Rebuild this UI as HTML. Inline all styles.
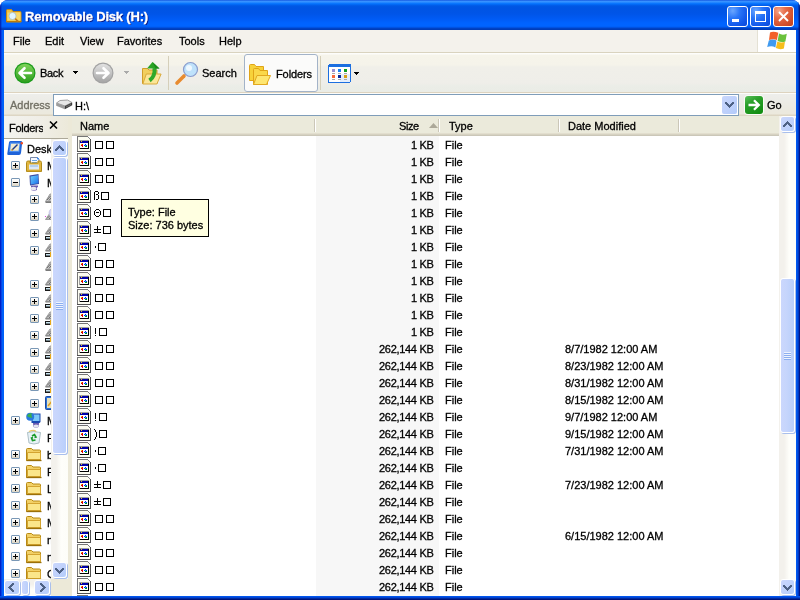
<!DOCTYPE html>
<html><head><meta charset="utf-8">
<style>
*{box-sizing:border-box;margin:0;padding:0}
html,body{width:800px;height:600px;overflow:hidden;background:#fff}
body{position:relative;font-family:"Liberation Sans",sans-serif;font-size:11px;color:#000}
.a{position:absolute;white-space:nowrap;will-change:transform;-webkit-text-stroke:0.3px currentColor}
svg{position:absolute;overflow:visible}
#frame{position:absolute;left:0;top:0;width:800px;height:600px;border-radius:8px 8px 0 0;overflow:hidden;background:#0831d9}
#title{position:absolute;left:0;top:0;width:800px;height:30px;
 background:linear-gradient(to bottom,#0a46d8 0px,#3a93ff 1px,#3590ff 2px,#127dff 3px,#036ffc 4px,#0262ee 5px,#0057e5 6px,#0054e3 8px,#0055e8 14px,#005bf5 19px,#0063ff 23px,#0064ff 26px,#005cf3 27px,#0048d0 28px,#003cb8 29px,#003cb8 30px)}
#ttext{left:25px;top:9px;font-weight:bold;font-size:13px;color:#fff;text-shadow:1px 1px 0 #0a1883;letter-spacing:-0.18px}
.tb{position:absolute;top:6px;width:21px;height:21px;border:1px solid #fff;border-radius:3px;
 background:radial-gradient(ellipse at 25% 20%,#6aa6ff 0%,#2a76f8 35%,#1359ea 70%,#0b48d8 100%)}
#bclose{background:radial-gradient(ellipse at 25% 20%,#f3a58a 0%,#e66a47 35%,#d4502b 70%,#c1401c 100%)}
/* borders */
#lb{left:0;top:30px;width:4px;height:570px;background:linear-gradient(to right,#0020c8 0,#0020c8 1px,#0844e4 1px,#0844e4 2px,#0060f8 2px,#0060f8 4px)}
#rb{left:796px;top:30px;width:4px;height:570px;background:linear-gradient(to right,#0058f0 0,#0058f0 1px,#004ee0 1px,#004ee0 2px,#0038c0 2px,#0038c0 3px,#00168c 3px)}
#bb{left:0;top:596px;width:800px;height:4px;background:linear-gradient(to bottom,#0055ee 0,#0055ee 1px,#0044d4 1px,#0044d4 2px,#002aa0 2px,#002aa0 3px,#001478 3px)}
.mi{top:35px}
.bx{position:absolute;width:8px;height:8px;border:1px solid #000}
.exp{position:absolute;width:9px;height:9px;border:1px solid #7a98b6;border-radius:1px;background:linear-gradient(to bottom,#fff 0,#f6f4ef 40%,#d9d2c1 100%)}
.exp b{position:absolute;left:1px;top:3px;width:5px;height:1px;background:#000}
.exp i{position:absolute;left:3px;top:1px;width:1px;height:5px;background:#000}
.trk{background:linear-gradient(to right,#f3f1ec 0,#f3f1ec 30%,#fefefa 60%,#fdfdf8 100%)}
.trkh{background:linear-gradient(to bottom,#f3f1ec 0,#f3f1ec 30%,#fefefa 60%,#fdfdf8 100%)}
.sbb{position:absolute;border:1px solid #fff;border-radius:3px;box-shadow:1px 1px 0 #a9bfec;background:linear-gradient(135deg,#cad7fd 0,#bfd1fb 55%,#b7cefb 85%,#c4d9fc 100%)}
.thumb{position:absolute;border:1px solid #fff;border-radius:3px;box-shadow:1px 1px 0 #a9bfec;background:linear-gradient(to right,#cbd7fd 0,#c6d5fc 40%,#b9cffb 100%)}
.grip{position:absolute;width:7px;height:8px;background:repeating-linear-gradient(to bottom,#eef3fe 0,#eef3fe 1px,#8caef0 1px,#8caef0 2px)}
.hdr{background:linear-gradient(to bottom,#ebeadb 0,#ebeadb 17px,#e2dece 17px,#e2dece 18px,#d6d2c2 18px,#d6d2c2 19px,#cbc7b8 19px)}
.hsep{width:2px;height:13px;border-left:1px solid #cbc7b8;border-right:1px solid #fff}

</style></head><body>
<svg width="0" height="0" style="position:absolute">
<defs>
<symbol id="ficon" viewBox="0 0 14 16" shape-rendering="crispEdges">
 <path d="M1 1h10v1h1v1h1v12H1z" fill="#fcfcf1"/>
 <rect x="0" y="0" width="1" height="16" fill="#767676"/>
 <rect x="0" y="0" width="11" height="1" fill="#767676"/>
 <rect x="11" y="1" width="1" height="1" fill="#808080"/>
 <rect x="12" y="2" width="1" height="1" fill="#808080"/>
 <rect x="11" y="2" width="1" height="1" fill="#fff"/>
 <rect x="13" y="3" width="1" height="13" fill="#505050"/>
 <rect x="0" y="15" width="14" height="1" fill="#505050"/>
 <rect x="2" y="4" width="10" height="9" fill="#a0a0a0"/>
 <rect x="3" y="5" width="9" height="8" fill="#000"/>
 <rect x="3" y="5" width="8" height="2" fill="#0000a8"/>
 <rect x="3" y="7" width="8" height="5" fill="#fff"/>
 <rect x="4" y="5" width="1" height="1" fill="#f0c020"/>
 <rect x="5" y="8" width="1" height="3" fill="#e00000"/>
 <rect x="4" y="9" width="1" height="1" fill="#d00000"/>
 <rect x="4" y="8" width="1" height="1" fill="#f0e000"/>
 <rect x="8" y="8" width="1" height="1" fill="#0020f0"/>
 <rect x="7" y="9" width="3" height="1" fill="#0020f0"/>
 <rect x="8" y="9" width="1" height="1" fill="#00d0f0"/>
 <rect x="8" y="10" width="2" height="1" fill="#00a000"/>
</symbol>
<symbol id="folder" viewBox="0 0 16 16">
 <path d="M1 3.5h5l1.5 1.5h7v9.5H1z" fill="#e9c45a" stroke="#c39a2c"/>
 <path d="M1.5 6.5h13v7.5h-13z" fill="#fbe48e"/>
 <path d="M1 14.5h14" stroke="#b0891f"/>
</symbol>
<symbol id="drive" viewBox="0 0 16 16">
 <path d="M1 9l4-5h9l-2 5z" fill="#c8c8c8" stroke="#7d7d7d" stroke-width="0.8"/>
 <rect x="1" y="9" width="11" height="4" fill="#4a4a4a"/>
 <rect x="2" y="10" width="9" height="2" fill="#9ec6e6"/>
 <rect x="12" y="9" width="2" height="4" fill="#e0a020"/>
</symbol>

<symbol id="i_desk" viewBox="0 0 16 16">
 <path d="M2 2.5Q2 1 3.5 1H14q1.5 0 1.2 1.5L14 13q-.3 2-2 2H1.5Q0 15 .3 13.5z" fill="#1f63d8"/>
 <path d="M3 2.5h10.5l-1.2 9.5H2z" fill="#4a8ef0"/>
 <path d="M4 3.8h8.5l-1 7H3.2z" fill="#f1ead0"/>
 <path d="M5 10l5.5-5.5" stroke="#1a3a8a" stroke-width="1.5"/>
 <path d="M4.5 10.5l1-1" stroke="#e8a020" stroke-width="1.4"/>
 <circle cx="14.8" cy="3.2" r="1.3" fill="#f04a20"/>
</symbol>
<symbol id="i_mydocs" viewBox="0 0 16 16">
 <path d="M4.5 0.5h7l1.5 1.5v8h-8.5z" fill="#f6f9ff" stroke="#7888a8"/>
 <path d="M11.5 0.5v1.5h1.5" fill="#3a8af0" stroke="#3a8af0"/>
 <path d="M6 3.5h5M6 5.5h5" stroke="#6aa8e8"/>
 <path d="M0.5 5.5q0-1.5 1.5-1.5h2v2h8v-2h2q1.5 0 1.5 1.5v9h-15z" fill="#e2b640" stroke="#b08a1a"/>
 <path d="M3 7.5h10v5H3z" fill="#dde9f7"/>
 <path d="M4 9h8" stroke="#8ab8e8"/>
 <path d="M1 13.5h14v1H1z" fill="#c89a20"/>
</symbol>
<symbol id="i_mycomp" viewBox="0 0 16 17">
 <path d="M3.5 1.5l9-1.5 .5 10-9 1.5z" fill="#3a4aa0"/>
 <path d="M4.5 2.5l7.5-1.2.3 8-7.5 1.2z" fill="url(#gscr)"/>
 <path d="M5 11.5h7v1.5l-1 .5v2.5q-3 1.5-6 0z" fill="#6a5ab0"/>
 <ellipse cx="7.5" cy="14.5" rx="3" ry="1.8" fill="#e8e8f0"/>
</symbol>
<linearGradient id="gscr" x1="0" y1="0" x2="1" y2="1"><stop offset="0" stop-color="#6cd0ff"/><stop offset="1" stop-color="#1a6ee8"/></linearGradient>
<symbol id="i_drive" viewBox="0 0 16 16">
 <path d="M0.5 10.5L5 3h11l-4.5 7.5z" fill="#c8c8c8" stroke="#8c8c8c" stroke-width="0.8"/>
 <path d="M2 9L6 4.5M4 9.5L7.5 5" stroke="#6a6a6a" stroke-width="1"/>
 <path d="M0.5 10.5h11v1.5H0.5z" fill="#7a7a7a"/>
</symbol>
<symbol id="i_drivey" viewBox="0 0 16 16">
 <path d="M0.5 8.5L5 2h11l-4.5 6.5z" fill="#c8c8c8" stroke="#8c8c8c" stroke-width="0.8"/>
 <path d="M2 7.5L6 3.5M4 8L7.5 4" stroke="#6a6a6a" stroke-width="1"/>
 <path d="M0.5 8.5h11v1H0.5z" fill="#7a7a7a"/>
 <rect x="0" y="11" width="5" height="4" fill="#1a1a1a"/>
 <rect x="1" y="12" width="4" height="1.5" fill="#c8e4f0"/>
 <rect x="5" y="10" width="1.5" height="5" fill="#e8a818"/>
</symbol>
<symbol id="i_cd" viewBox="0 0 16 16">
 <path d="M0.5 11.5L5 5h11l-4.5 6.5z" fill="#c8c8c8" stroke="#8c8c8c" stroke-width="0.8"/>
 <path d="M2 10.5L6 6.5M4 11L7.5 7" stroke="#6a6a6a" stroke-width="1"/>
 <circle cx="9" cy="5" r="5" fill="#d8d8f4" stroke="#b0b0d8" stroke-width="0.6"/>
 <rect x="0" y="8" width="1" height="1" fill="#e040e0"/>
</symbol>
<symbol id="i_cpanel" viewBox="0 0 16 16">
 <rect x="0.5" y="1.5" width="14" height="13" rx="1" fill="#2a70d8" stroke="#1a4aa0"/>
 <rect x="2" y="3" width="11" height="10" fill="#e8e0b8"/>
 <path d="M3 11l4-5 3 3" stroke="#e0a020" stroke-width="1.5" fill="none"/>
</symbol>
<symbol id="i_net" viewBox="0 0 16 16">
 <path d="M5.5 1.5h9v8.5l-1 1h-8z" fill="#1a4ab0"/>
 <path d="M6.5 2.5h7v6.5h-7z" fill="#7cc8f8"/>
 <circle cx="4.2" cy="4.8" r="4" fill="#2a7ae0"/>
 <path d="M1 4c1-2 3-3 5-2.5-1 1.5-.5 3 .5 4-2 .5-3.5 0-5.5-1.5z" fill="#3ab04a"/>
 <path d="M7 11h6v1.5l-.5 .5V15q-2.5 1.2-5 0z" fill="#6a5ab0"/>
 <ellipse cx="10" cy="14" rx="2.6" ry="1.6" fill="#e4e4ee"/>
</symbol>
<symbol id="i_recyc" viewBox="0 0 16 16">
 <path d="M1.5 3.5q6-2 13 0l-1.5 10.5q-5 2-10 0z" fill="#e8f2f6" stroke="#9ab0b8" stroke-width="0.8"/>
 <path d="M3 2.5q3-1.5 6-1l1 1.5" stroke="#e8c868" stroke-width="1.2" fill="none"/>
 <path d="M6 7l2.5-1.5L10 8l-1.5 .5M9.5 11l-3 .5-1-2.5 1.5-.5" stroke="#1a9a2a" stroke-width="1.6" fill="none"/>
</symbol>
<symbol id="i_folder" viewBox="0 0 16 16">
 <path d="M0.5 3.5q0-1 1-1h4l1.5 1.5h6.5q1 0 1 1v9.5H0.5z" fill="#f2d066" stroke="#b88a14"/>
 <path d="M1.5 6.5h13v7h-13z" fill="#fbe68a" stroke="#d4a430"/>
 <path d="M0.5 14.5h15" stroke="#9a700a" stroke-width="1.3"/>
</symbol>
<linearGradient id="gcirc" x1="0" y1="0" x2="0" y2="1"><stop offset="0" stop-color="#7fd35a"/><stop offset="1" stop-color="#2d9f1e"/></linearGradient>
<linearGradient id="gcircg" x1="0" y1="0" x2="0" y2="1"><stop offset="0" stop-color="#e2e2e2"/><stop offset="1" stop-color="#a5a5a5"/></linearGradient>
<linearGradient id="sbtn" x1="0" y1="0" x2="1" y2="1"><stop offset="0" stop-color="#dbe5fd"/><stop offset="1" stop-color="#b5cbf9"/></linearGradient>
</defs></svg>

<div id="frame">
 <div id="title"></div><div style="position:absolute;left:0;top:0;width:4px;height:30px;background:linear-gradient(to right,rgba(0,20,160,.7) 0,rgba(0,20,160,.7) 1px,rgba(0,30,170,.3) 1px,rgba(0,30,170,.3) 2px,transparent 2px)"></div><div style="position:absolute;left:796px;top:0;width:4px;height:30px;background:linear-gradient(to right,transparent 0,transparent 2px,rgba(0,20,120,.4) 2px,rgba(0,20,120,.4) 3px,rgba(0,10,110,.8) 3px)"></div>
</div>
<div id="lb" class="a"></div><div id="rb" class="a"></div><div id="bb" class="a"></div>

<!-- title icon -->
<svg style="left:6px;top:9px" width="16" height="14" viewBox="0 0 16 14">
 <path d="M0.5 1.5q0-1 1-1h4l1.5 2h7q1 0 1 1v9.5H0.5z" fill="#f0c040" stroke="#c88a10"/>
 <path d="M1.5 3.5h13v8h-13z" fill="#f8d868"/>
 <path d="M0.5 12.5h15" stroke="#b87a08"/>
 <circle cx="6.5" cy="7" r="3.6" fill="#dff4ff" stroke="#a8b8c0" stroke-width="0.8"/>
 <path d="M9.2 9.6l3 3" stroke="#c07818" stroke-width="1.6"/>
</svg>
<div id="ttext" class="a">Removable Disk (H:)</div>
<div class="tb" style="left:727px"><div style="position:absolute;left:4px;top:12px;width:7px;height:3px;background:#fff"></div></div>
<div class="tb" style="left:750px"><div style="position:absolute;left:4px;top:4px;width:11px;height:11px;border:1px solid #fff;border-top-width:3px"></div></div>
<div class="tb" id="bclose" style="left:773px"><svg style="left:4px;top:4px" width="11" height="11" viewBox="0 0 11 11"><path d="M1 1L10 10M10 1L1 10" stroke="#fff" stroke-width="1.9"/></svg></div>

<!-- menu bar -->
<div class="a" style="left:4px;top:30px;width:753px;height:22px;background:#f4f2ec"></div>
<div class="a" style="left:757px;top:30px;width:39px;height:22px;background:#fff;border-left:1px solid #e4e1d4"></div>
<svg style="left:767px;top:31px" width="20" height="19" viewBox="0 0 20 19">
 <path d="M3 1.5C5 0.6 8 0.6 11.3 1.8L9.9 8.9C7.5 7.9 5 7.9 2 9z" fill="#f2602a"/>
 <path d="M12 2.6C14 3.8 16.5 4.2 19.8 2.8L18.4 10.4C15.5 11.4 13 11 10.6 10z" fill="#6ac13c"/>
 <path d="M1.8 9.6C4.5 8.2 7 8.3 9.5 9.5L8.4 16.4C6 15.1 3 15 0.2 16.1z" fill="#3f9af0"/>
 <path d="M10.3 10.6C12.5 11.6 15 11.8 17.9 11L16.9 17.6C14 18.5 11.5 18.3 8.9 17.1z" fill="#f6bd1c"/>
</svg>
<div class="a mi" style="left:13px">File</div>
<div class="a mi" style="left:45px">Edit</div>
<div class="a mi" style="left:80px">View</div>
<div class="a mi" style="left:117px">Favorites</div>
<div class="a mi" style="left:179px">Tools</div>
<div class="a mi" style="left:219px">Help</div>
<div class="a" style="left:4px;top:52px;width:792px;height:1px;background:#d9d3bf"></div>

<!-- toolbar -->
<div class="a" style="left:4px;top:53px;width:792px;height:39px;background:linear-gradient(to bottom,#fdfdfb 0,#fdfdfb 1px,#f6f4ea 2px,#f5f3ea 12px,#f0efe9 14px,#efeee9 30px,#ebede7 33px,#eaece6 39px)"></div>
<div class="a" style="left:4px;top:92px;width:792px;height:1px;background:#ddd3bf"></div>
<!-- back -->
<svg style="left:14px;top:62px" width="22" height="22" viewBox="0 0 22 22">
 <circle cx="11" cy="11" r="10.5" fill="#1b9b1b"/>
 <circle cx="11" cy="11" r="9.3" fill="url(#gcirc)"/>
 <path d="M17 11H6M10.5 6.2L5.5 11l5 4.8" fill="none" stroke="#fff" stroke-width="2.6" stroke-linecap="round" stroke-linejoin="round"/>
</svg>
<div class="a" style="left:40px;top:67px;letter-spacing:-0.3px">Back</div>
<svg style="left:73px;top:71px" width="5" height="3" shape-rendering="crispEdges"><path d="M0 0h5v1H0zM1 1h3v1H1zM2 2h1v1H2z" fill="#000"/></svg>
<!-- forward -->
<svg style="left:92px;top:62px" width="22" height="22" viewBox="0 0 22 22">
 <circle cx="11" cy="11" r="10.5" fill="#a2a2a2"/>
 <circle cx="11" cy="11" r="9.3" fill="url(#gcircg)"/>
 <path d="M5 11h11M11.5 6.2l5 4.8-5 4.8" fill="none" stroke="#fff" stroke-width="2.6" stroke-linecap="round" stroke-linejoin="round"/>
</svg>
<svg style="left:124px;top:71px" width="5" height="3" shape-rendering="crispEdges"><path d="M0 0h5v1H0zM1 1h3v1H1zM2 2h1v1H2z" fill="#aaa"/></svg>
<!-- up -->
<svg style="left:142px;top:61px" width="20" height="24" viewBox="0 0 20 24">
 <path d="M0.5 7.5h5l1.5 1.5h8v13.5H0.5z" fill="#f1cf5e" stroke="#d29e2a"/>
 <path d="M0.8 23l3.5-10h14.8l-4.2 10z" fill="#fbe698" stroke="#d6a430" stroke-width="0.9"/>
 <path d="M7.5 19.5C11 17 13 12 12.5 7" fill="none" stroke="#2fa82a" stroke-width="4"/>
 <path d="M5 7.5L10.5 1 17.5 7.5z" fill="#2aa424"/>
 <path d="M10.5 1L17.5 7.5h-4z" fill="#1a8a1a"/>
</svg>
<div class="a" style="left:168px;top:56px;width:1px;height:34px;background:#d5cfba"></div>
<!-- search -->
<svg style="left:175px;top:62px" width="24" height="23" viewBox="0 0 24 23">
 <path d="M2 21l7-7" stroke="#e88b2f" stroke-width="3.6" stroke-linecap="round"/>
 <circle cx="15.5" cy="7.5" r="7" fill="#bfe2fb" stroke="#8a9ccc" stroke-width="1.2"/>
 <circle cx="14" cy="6" r="3" fill="#eef8ff"/>
</svg>
<div class="a" style="left:202px;top:67px">Search</div>
<!-- folders button -->
<div class="a" style="left:244px;top:54px;width:74px;height:38px;border:1px solid #a3b3c8;border-radius:3px;background:#fbfbfa"></div>
<svg style="left:249px;top:64px" width="22" height="21" viewBox="0 0 22 21">
 <path d="M0.5 1.5q0-1 1-1h4l1.5 2h7.5v14H0.5z" fill="#f7d23a" stroke="#e0a418"/>
 <path d="M4.5 5.5q0-1 1-1h4l1.5 2h7.5v14H4.5z" fill="#fad84a" stroke="#e0a418"/>
 <path d="M4.5 20.5l3.5-9h13.5l-4 9z" fill="#fee670" stroke="#e2a820"/>
</svg>
<div class="a" style="left:276px;top:68px;letter-spacing:-0.1px">Folders</div>
<div class="a" style="left:320px;top:56px;width:1px;height:34px;background:#d5cfba"></div>
<!-- views -->
<svg style="left:328px;top:64px" width="24" height="20" viewBox="0 0 24 20" shape-rendering="crispEdges">
 <rect x="0" y="0" width="23" height="19" rx="2" fill="#1c6fe0"/>
 <rect x="1" y="3" width="21" height="15" fill="#fff"/>
 <rect x="12" y="10" width="10" height="8" fill="#e4eefc"/>
 <rect x="4" y="5" width="3" height="3" fill="#9a90d0"/><rect x="10" y="5" width="3" height="3" fill="#1a80f0"/><rect x="16" y="5" width="3" height="3" fill="#10a020"/>
 <rect x="4" y="9" width="3" height="1" fill="#a8a8a8"/><rect x="10" y="9" width="3" height="1" fill="#a8a8a8"/><rect x="16" y="9" width="3" height="1" fill="#a8a8a8"/>
 <rect x="4" y="11" width="3" height="3" fill="#f86a3a"/><rect x="10" y="11" width="3" height="3" fill="#0a2a98"/><rect x="16" y="11" width="3" height="3" fill="#d8a018"/>
 <rect x="4" y="15" width="3" height="1" fill="#a8a8a8"/><rect x="10" y="15" width="3" height="1" fill="#a8a8a8"/><rect x="16" y="15" width="3" height="1" fill="#a8a8a8"/>
</svg>
<svg style="left:354px;top:72px" width="5" height="3" shape-rendering="crispEdges"><path d="M0 0h5v1H0zM1 1h3v1H1zM2 2h1v1H2z" fill="#000"/></svg>

<!-- address bar -->
<div class="a" style="left:4px;top:93px;width:792px;height:23px;background:linear-gradient(to bottom,#fcfcfa 0,#fcfcfa 1px,#eeeeeb 1px,#ecebe5 10px,#ebe9df 18px,#ece9dd 21px,#ddd6c4 22px)"></div>
<div class="a" style="left:10px;top:99px;color:#716f64">Address</div>
<div class="a" style="left:53px;top:94px;width:686px;height:22px;background:#fff;border:1px solid #7f9db9"></div>
<svg style="left:55px;top:99px" width="18" height="11" viewBox="0 0 18 11">
 <path d="M1.5 4L5 1.5 12.5 1 17 3.5 10 7z" fill="#e8e8e8" stroke="#8a8a8a" stroke-width="0.8"/>
 <path d="M1.2 4L10 7 9.8 10.2 1.2 6.8z" fill="#9c9c9c"/>
 <path d="M10 7L17.2 3.5 17.2 6.2 9.8 10.2z" fill="#3a3a3a"/>
 <path d="M11 8L16 5.5" stroke="#8a8a8a" stroke-width="0.7"/>
</svg>
<div class="a" style="left:75px;top:100px">H:\</div>
<div class="a" style="left:722px;top:96px;width:15px;height:18px;border-radius:2px;background:linear-gradient(135deg,#c9d7fd 0,#bdd0fb 60%,#b3cbfa 100%)"></div>
<svg style="left:725px;top:102px" width="9" height="6" shape-rendering="crispEdges"><path d="M0 0h2v1H0zM7 0h2v1H7zM0 1h3v1H0zM6 1h3v1H6zM1 2h3v1H1zM5 2h3v1H5zM2 3h5v1H2zM3 4h3v1H3zM4 5h1v1H4z" fill="#4d6185"/></svg>
<div class="a" style="left:745px;top:96px;width:18px;height:18px;border-radius:3px;background:linear-gradient(150deg,#5cc05c 0,#2aa02a 35%,#0e8a0e 100%);box-shadow:0 0 0 1px #fbfbf6"></div>
<svg style="left:747px;top:98px" width="14" height="14" viewBox="0 0 14 14"><path d="M1.5 7h9.5M7 2.2L11.8 7 7 11.8" fill="none" stroke="#fff" stroke-width="2.3"/></svg>
<div class="a" style="left:767px;top:99px">Go</div>

<div class="a" style="left:4px;top:116px;width:64px;height:22px;background:linear-gradient(to right,#f3f3ef 0,#f0eee7 55%,#ece9da 100%)"></div>
<div class="a" style="left:68px;top:116px;width:4px;height:480px;background:#ece9d8"></div>
<div class="a" style="left:9px;top:122px;width:34px;overflow:hidden;letter-spacing:-0.3px">Folders</div>
<svg style="left:49px;top:121px" width="9" height="8" viewBox="0 0 9 8"><path d="M1 0.5l7 7M8 0.5l-7 7" stroke="#000" stroke-width="1.6"/></svg>
<div class="a" style="left:4px;top:138px;width:64px;height:1px;background:#aca899"></div>
<div class="a" style="left:4px;top:139px;width:47px;height:440px;background:#fff;overflow:hidden">
<div class="a" style="left:-4px;top:-139px;width:800px;height:600px">
<svg style="left:7px;top:140px" width="16" height="16" viewBox="0 0 16 16"><use href="#i_desk"/></svg>
<div class="a" style="left:27px;top:143px">Desktop</div>
<div class="exp" style="left:11px;top:161px"><i></i><b></b></div>
<svg style="left:26px;top:157px" width="16" height="16"><use href="#i_mydocs"/></svg>
<div class="a" style="left:47px;top:160px">My Documents</div>
<div class="exp" style="left:11px;top:178px"><b></b></div>
<svg style="left:26px;top:174px" width="16" height="17"><use href="#i_mycomp"/></svg>
<div class="a" style="left:47px;top:177px">My Computer</div>
<div class="exp" style="left:30px;top:195px"><i></i><b></b></div>
<svg style="left:45px;top:191px" width="16" height="16"><use href="#i_drive"/></svg>
<div class="a" style="left:66px;top:194px">Drive</div>
<div class="exp" style="left:30px;top:212px"><i></i><b></b></div>
<svg style="left:45px;top:208px" width="16" height="16"><use href="#i_cd"/></svg>
<div class="a" style="left:66px;top:211px">DVD</div>
<div class="exp" style="left:30px;top:229px"><i></i><b></b></div>
<svg style="left:45px;top:225px" width="16" height="16"><use href="#i_drivey"/></svg>
<div class="a" style="left:66px;top:228px">Drive</div>
<div class="exp" style="left:30px;top:246px"><i></i><b></b></div>
<svg style="left:45px;top:242px" width="16" height="16"><use href="#i_drivey"/></svg>
<div class="a" style="left:66px;top:245px">Drive</div>
<svg style="left:45px;top:259px" width="16" height="16"><use href="#i_drive"/></svg>
<div class="a" style="left:66px;top:262px">Drive</div>
<div class="exp" style="left:30px;top:280px"><i></i><b></b></div>
<svg style="left:45px;top:276px" width="16" height="16"><use href="#i_drivey"/></svg>
<div class="a" style="left:66px;top:279px">Drive</div>
<div class="exp" style="left:30px;top:297px"><i></i><b></b></div>
<svg style="left:45px;top:293px" width="16" height="16"><use href="#i_drivey"/></svg>
<div class="a" style="left:66px;top:296px">Drive</div>
<div class="exp" style="left:30px;top:314px"><i></i><b></b></div>
<svg style="left:45px;top:310px" width="16" height="16"><use href="#i_drivey"/></svg>
<div class="a" style="left:66px;top:313px">Drive</div>
<div class="exp" style="left:30px;top:331px"><i></i><b></b></div>
<svg style="left:45px;top:327px" width="16" height="16"><use href="#i_drivey"/></svg>
<div class="a" style="left:66px;top:330px">Drive</div>
<div class="exp" style="left:30px;top:348px"><i></i><b></b></div>
<svg style="left:45px;top:344px" width="16" height="16"><use href="#i_drivey"/></svg>
<div class="a" style="left:66px;top:347px">Drive</div>
<div class="exp" style="left:30px;top:365px"><i></i><b></b></div>
<svg style="left:45px;top:361px" width="16" height="16"><use href="#i_drivey"/></svg>
<div class="a" style="left:66px;top:364px">Drive</div>
<div class="exp" style="left:30px;top:382px"><i></i><b></b></div>
<svg style="left:45px;top:378px" width="16" height="16"><use href="#i_drivey"/></svg>
<div class="a" style="left:66px;top:381px">Drive</div>
<div class="exp" style="left:30px;top:399px"><i></i><b></b></div>
<svg style="left:45px;top:395px" width="16" height="16"><use href="#i_cpanel"/></svg>
<div class="a" style="left:66px;top:398px">Shared</div>
<div class="exp" style="left:11px;top:416px"><i></i><b></b></div>
<svg style="left:26px;top:412px" width="16" height="16"><use href="#i_net"/></svg>
<div class="a" style="left:47px;top:415px">My Network Places</div>
<svg style="left:26px;top:429px" width="16" height="16"><use href="#i_recyc"/></svg>
<div class="a" style="left:47px;top:432px">Recycle Bin</div>
<div class="exp" style="left:11px;top:450px"><i></i><b></b></div>
<svg style="left:26px;top:446px" width="16" height="16"><use href="#i_folder"/></svg>
<div class="a" style="left:47px;top:449px">bxxxx</div>
<div class="exp" style="left:11px;top:467px"><i></i><b></b></div>
<svg style="left:26px;top:463px" width="16" height="16"><use href="#i_folder"/></svg>
<div class="a" style="left:47px;top:466px">Fxxxx</div>
<div class="exp" style="left:11px;top:484px"><i></i><b></b></div>
<svg style="left:26px;top:480px" width="16" height="16"><use href="#i_folder"/></svg>
<div class="a" style="left:47px;top:483px">Lxxxx</div>
<div class="exp" style="left:11px;top:501px"><i></i><b></b></div>
<svg style="left:26px;top:497px" width="16" height="16"><use href="#i_folder"/></svg>
<div class="a" style="left:47px;top:500px">Mxxxx</div>
<div class="exp" style="left:11px;top:518px"><i></i><b></b></div>
<svg style="left:26px;top:514px" width="16" height="16"><use href="#i_folder"/></svg>
<div class="a" style="left:47px;top:517px">Mxxxx</div>
<div class="exp" style="left:11px;top:535px"><i></i><b></b></div>
<svg style="left:26px;top:531px" width="16" height="16"><use href="#i_folder"/></svg>
<div class="a" style="left:47px;top:534px">mxxxx</div>
<div class="exp" style="left:11px;top:552px"><i></i><b></b></div>
<svg style="left:26px;top:548px" width="16" height="16"><use href="#i_folder"/></svg>
<div class="a" style="left:47px;top:551px">mxxxx</div>
<div class="exp" style="left:11px;top:569px"><i></i><b></b></div>
<svg style="left:26px;top:565px" width="16" height="16"><use href="#i_folder"/></svg>
<div class="a" style="left:47px;top:568px">Cxxxx</div>
</div></div>
<div class="a trk" style="left:51px;top:139px;width:17px;height:440px"></div>
<div class="sbb" style="left:52px;top:140px;width:15px;height:16px"><svg style="left:2px;top:4px" width="9" height="6" shape-rendering="crispEdges"><path d="M4 0h1v1h-1zM3 1h3v1h-3zM2 2h5v1h-5zM1 3h3v1h-3zM5 3h3v1h-3zM0 4h3v1h-3zM6 4h3v1h-3zM0 5h2v1h-2zM7 5h2v1h-2z" fill="#4d6185"/></svg></div>
<div class="thumb" style="left:52px;top:157px;width:15px;height:297px"><i class="grip" style="left:3px;top:144px"></i></div>
<div class="sbb" style="left:52px;top:562px;width:15px;height:16px"><svg style="left:2px;top:5px" width="9" height="6" shape-rendering="crispEdges"><path d="M0 0h2v1h-2zM7 0h2v1h-2zM0 1h3v1h-3zM6 1h3v1h-3zM1 2h3v1h-3zM5 2h3v1h-3zM2 3h5v1h-5zM3 4h3v1h-3zM4 5h1v1h-1z" fill="#4d6185"/></svg></div>
<div class="a trkh" style="left:4px;top:579px;width:47px;height:17px"></div>
<div class="sbb" style="left:4px;top:580px;width:16px;height:15px"><svg style="left:3px;top:2px" width="6" height="9" shape-rendering="crispEdges"><path d="M4 0h2v1h-2zM3 1h3v1h-3zM2 2h3v1h-3zM1 3h3v1h-3zM0 4h3v1h-3zM1 5h3v1h-3zM2 6h3v1h-3zM3 7h3v1h-3zM4 8h2v1h-2z" fill="#4d6185"/></svg></div>
<div class="thumb" style="left:21px;top:580px;width:8px;height:15px"></div>
<div class="sbb" style="left:34px;top:580px;width:16px;height:15px"><svg style="left:5px;top:2px" width="6" height="9" shape-rendering="crispEdges"><path d="M0 0h2v1h-2zM0 1h3v1h-3zM1 2h3v1h-3zM2 3h3v1h-3zM3 4h3v1h-3zM2 5h3v1h-3zM1 6h3v1h-3zM0 7h3v1h-3zM0 8h2v1h-2z" fill="#4d6185"/></svg></div>
<div class="a" style="left:51px;top:579px;width:17px;height:17px;background:#ece9d8"></div>
<div class="a" style="left:72px;top:116px;width:707px;height:480px;background:#fff;overflow:hidden">
<div class="a" style="left:-72px;top:-116px;width:800px;height:600px">
<div class="a" style="left:316px;top:136px;width:123px;height:465px;background:#f7f7f7"></div>
<div class="bx" style="left:95px;top:141px"></div>
<div class="bx" style="left:106px;top:141px"></div>
<svg style="left:77px;top:136px" width="14" height="16"><use href="#ficon"/></svg>
<div class="a sz" style="right:366.7px;top:139px;letter-spacing:-0.3px">1 KB</div>
<div class="a" style="left:445px;top:139px">File</div>
<div class="bx" style="left:95px;top:158px"></div>
<div class="bx" style="left:106px;top:158px"></div>
<svg style="left:77px;top:153px" width="14" height="16"><use href="#ficon"/></svg>
<div class="a sz" style="right:366.7px;top:156px;letter-spacing:-0.3px">1 KB</div>
<div class="a" style="left:445px;top:156px">File</div>
<div class="bx" style="left:95px;top:175px"></div>
<div class="bx" style="left:106px;top:175px"></div>
<svg style="left:77px;top:170px" width="14" height="16"><use href="#ficon"/></svg>
<div class="a sz" style="right:366.7px;top:173px;letter-spacing:-0.3px">1 KB</div>
<div class="a" style="left:445px;top:173px">File</div>
<svg style="left:94px;top:191px" width="5" height="9" shape-rendering="crispEdges"><path d="M1 0h3v1h-3zM0 1h1v1h-1zM4 1h1v1h-1zM0 2h1v1h-1zM4 2h1v1h-1zM0 3h1v1h-1zM2 3h2v1h-2zM0 4h1v1h-1zM4 4h1v1h-1zM0 5h1v1h-1zM4 5h1v1h-1zM0 6h1v1h-1zM4 6h1v1h-1zM0 7h1v1h-1zM4 7h1v1h-1zM0 8h1v1h-1zM2 8h2v1h-2z" fill="#000"/></svg>
<div class="bx" style="left:101px;top:192px"></div>
<svg style="left:77px;top:187px" width="14" height="16"><use href="#ficon"/></svg>
<div class="a sz" style="right:366.7px;top:190px;letter-spacing:-0.3px">1 KB</div>
<div class="a" style="left:445px;top:190px">File</div>
<svg style="left:94px;top:209px" width="7" height="8" shape-rendering="crispEdges"><path d="M2 0h3v1h-3zM1 1h1v1h-1zM5 1h1v1h-1zM0 2h1v1h-1zM6 2h1v1h-1zM0 3h1v1h-1zM2 3h3v1h-3zM6 3h1v1h-1zM0 4h1v1h-1zM6 4h1v1h-1zM0 5h1v1h-1zM6 5h1v1h-1zM1 6h1v1h-1zM5 6h1v1h-1zM2 7h3v1h-3z" fill="#000"/></svg>
<div class="bx" style="left:103px;top:209px"></div>
<svg style="left:77px;top:204px" width="14" height="16"><use href="#ficon"/></svg>
<div class="a sz" style="right:366.7px;top:207px;letter-spacing:-0.3px">1 KB</div>
<div class="a" style="left:445px;top:207px">File</div>
<svg style="left:94px;top:226px" width="7" height="7" shape-rendering="crispEdges"><path d="M3 0h1v1h-1zM3 1h1v1h-1zM3 2h1v1h-1zM0 3h7v1h-7zM3 4h1v1h-1zM3 5h1v1h-1zM0 6h7v1h-7z" fill="#000"/></svg>
<div class="bx" style="left:103px;top:226px"></div>
<svg style="left:77px;top:221px" width="14" height="16"><use href="#ficon"/></svg>
<div class="a sz" style="right:366.7px;top:224px;letter-spacing:-0.3px">1 KB</div>
<div class="a" style="left:445px;top:224px">File</div>
<svg style="left:95px;top:246px" width="1" height="2" shape-rendering="crispEdges"><path d="M0 0h1v1h-1zM0 1h1v1h-1z" fill="#000"/></svg>
<div class="bx" style="left:98px;top:243px"></div>
<svg style="left:77px;top:238px" width="14" height="16"><use href="#ficon"/></svg>
<div class="a sz" style="right:366.7px;top:241px;letter-spacing:-0.3px">1 KB</div>
<div class="a" style="left:445px;top:241px">File</div>
<div class="bx" style="left:95px;top:260px"></div>
<div class="bx" style="left:106px;top:260px"></div>
<svg style="left:77px;top:255px" width="14" height="16"><use href="#ficon"/></svg>
<div class="a sz" style="right:366.7px;top:258px;letter-spacing:-0.3px">1 KB</div>
<div class="a" style="left:445px;top:258px">File</div>
<div class="bx" style="left:95px;top:277px"></div>
<div class="bx" style="left:106px;top:277px"></div>
<svg style="left:77px;top:272px" width="14" height="16"><use href="#ficon"/></svg>
<div class="a sz" style="right:366.7px;top:275px;letter-spacing:-0.3px">1 KB</div>
<div class="a" style="left:445px;top:275px">File</div>
<div class="bx" style="left:95px;top:294px"></div>
<div class="bx" style="left:106px;top:294px"></div>
<svg style="left:77px;top:289px" width="14" height="16"><use href="#ficon"/></svg>
<div class="a sz" style="right:366.7px;top:292px;letter-spacing:-0.3px">1 KB</div>
<div class="a" style="left:445px;top:292px">File</div>
<div class="bx" style="left:95px;top:311px"></div>
<div class="bx" style="left:106px;top:311px"></div>
<svg style="left:77px;top:306px" width="14" height="16"><use href="#ficon"/></svg>
<div class="a sz" style="right:366.7px;top:309px;letter-spacing:-0.3px">1 KB</div>
<div class="a" style="left:445px;top:309px">File</div>
<svg style="left:95px;top:328px" width="1" height="8" shape-rendering="crispEdges"><path d="M0 0h1v1h-1zM0 1h1v1h-1zM0 2h1v1h-1zM0 3h1v1h-1zM0 4h1v1h-1zM0 5h1v1h-1zM0 7h1v1h-1z" fill="#000"/></svg>
<div class="bx" style="left:99px;top:328px"></div>
<svg style="left:77px;top:323px" width="14" height="16"><use href="#ficon"/></svg>
<div class="a sz" style="right:366.7px;top:326px;letter-spacing:-0.3px">1 KB</div>
<div class="a" style="left:445px;top:326px">File</div>
<div class="bx" style="left:95px;top:345px"></div>
<div class="bx" style="left:106px;top:345px"></div>
<svg style="left:77px;top:340px" width="14" height="16"><use href="#ficon"/></svg>
<div class="a sz" style="right:366.7px;top:343px;letter-spacing:-0.3px">262,144 KB</div>
<div class="a" style="left:445px;top:343px">File</div>
<div class="a" style="left:565px;top:343px">8/7/1982 12:00 AM</div>
<div class="bx" style="left:95px;top:362px"></div>
<div class="bx" style="left:106px;top:362px"></div>
<svg style="left:77px;top:357px" width="14" height="16"><use href="#ficon"/></svg>
<div class="a sz" style="right:366.7px;top:360px;letter-spacing:-0.3px">262,144 KB</div>
<div class="a" style="left:445px;top:360px">File</div>
<div class="a" style="left:565px;top:360px">8/23/1982 12:00 AM</div>
<div class="bx" style="left:95px;top:379px"></div>
<div class="bx" style="left:106px;top:379px"></div>
<svg style="left:77px;top:374px" width="14" height="16"><use href="#ficon"/></svg>
<div class="a sz" style="right:366.7px;top:377px;letter-spacing:-0.3px">262,144 KB</div>
<div class="a" style="left:445px;top:377px">File</div>
<div class="a" style="left:565px;top:377px">8/31/1982 12:00 AM</div>
<div class="bx" style="left:95px;top:396px"></div>
<div class="bx" style="left:106px;top:396px"></div>
<svg style="left:77px;top:391px" width="14" height="16"><use href="#ficon"/></svg>
<div class="a sz" style="right:366.7px;top:394px;letter-spacing:-0.3px">262,144 KB</div>
<div class="a" style="left:445px;top:394px">File</div>
<div class="a" style="left:565px;top:394px">8/15/1982 12:00 AM</div>
<svg style="left:95px;top:413px" width="1" height="8" shape-rendering="crispEdges"><path d="M0 0h1v1h-1zM0 1h1v1h-1zM0 2h1v1h-1zM0 3h1v1h-1zM0 4h1v1h-1zM0 5h1v1h-1zM0 7h1v1h-1z" fill="#000"/></svg>
<div class="bx" style="left:99px;top:413px"></div>
<svg style="left:77px;top:408px" width="14" height="16"><use href="#ficon"/></svg>
<div class="a sz" style="right:366.7px;top:411px;letter-spacing:-0.3px">262,144 KB</div>
<div class="a" style="left:445px;top:411px">File</div>
<div class="a" style="left:565px;top:411px">9/7/1982 12:00 AM</div>
<svg style="left:94px;top:429px" width="3" height="11" shape-rendering="crispEdges"><path d="M0 0h1v1h-1zM1 1h1v1h-1zM1 2h1v1h-1zM2 3h1v1h-1zM2 4h1v1h-1zM2 5h1v1h-1zM2 6h1v1h-1zM2 7h1v1h-1zM1 8h1v1h-1zM1 9h1v1h-1zM0 10h1v1h-1z" fill="#000"/></svg>
<div class="bx" style="left:99px;top:430px"></div>
<svg style="left:77px;top:425px" width="14" height="16"><use href="#ficon"/></svg>
<div class="a sz" style="right:366.7px;top:428px;letter-spacing:-0.3px">262,144 KB</div>
<div class="a" style="left:445px;top:428px">File</div>
<div class="a" style="left:565px;top:428px">9/15/1982 12:00 AM</div>
<svg style="left:95px;top:450px" width="1" height="2" shape-rendering="crispEdges"><path d="M0 0h1v1h-1zM0 1h1v1h-1z" fill="#000"/></svg>
<div class="bx" style="left:98px;top:447px"></div>
<svg style="left:77px;top:442px" width="14" height="16"><use href="#ficon"/></svg>
<div class="a sz" style="right:366.7px;top:445px;letter-spacing:-0.3px">262,144 KB</div>
<div class="a" style="left:445px;top:445px">File</div>
<div class="a" style="left:565px;top:445px">7/31/1982 12:00 AM</div>
<svg style="left:95px;top:467px" width="1" height="2" shape-rendering="crispEdges"><path d="M0 0h1v1h-1zM0 1h1v1h-1z" fill="#000"/></svg>
<div class="bx" style="left:98px;top:464px"></div>
<svg style="left:77px;top:459px" width="14" height="16"><use href="#ficon"/></svg>
<div class="a sz" style="right:366.7px;top:462px;letter-spacing:-0.3px">262,144 KB</div>
<div class="a" style="left:445px;top:462px">File</div>
<svg style="left:94px;top:481px" width="7" height="7" shape-rendering="crispEdges"><path d="M3 0h1v1h-1zM3 1h1v1h-1zM3 2h1v1h-1zM0 3h7v1h-7zM3 4h1v1h-1zM3 5h1v1h-1zM0 6h7v1h-7z" fill="#000"/></svg>
<div class="bx" style="left:103px;top:481px"></div>
<svg style="left:77px;top:476px" width="14" height="16"><use href="#ficon"/></svg>
<div class="a sz" style="right:366.7px;top:479px;letter-spacing:-0.3px">262,144 KB</div>
<div class="a" style="left:445px;top:479px">File</div>
<div class="a" style="left:565px;top:479px">7/23/1982 12:00 AM</div>
<svg style="left:94px;top:498px" width="7" height="7" shape-rendering="crispEdges"><path d="M3 0h1v1h-1zM3 1h1v1h-1zM3 2h1v1h-1zM0 3h7v1h-7zM3 4h1v1h-1zM3 5h1v1h-1zM0 6h7v1h-7z" fill="#000"/></svg>
<div class="bx" style="left:103px;top:498px"></div>
<svg style="left:77px;top:493px" width="14" height="16"><use href="#ficon"/></svg>
<div class="a sz" style="right:366.7px;top:496px;letter-spacing:-0.3px">262,144 KB</div>
<div class="a" style="left:445px;top:496px">File</div>
<div class="bx" style="left:95px;top:515px"></div>
<div class="bx" style="left:106px;top:515px"></div>
<svg style="left:77px;top:510px" width="14" height="16"><use href="#ficon"/></svg>
<div class="a sz" style="right:366.7px;top:513px;letter-spacing:-0.3px">262,144 KB</div>
<div class="a" style="left:445px;top:513px">File</div>
<div class="bx" style="left:95px;top:532px"></div>
<div class="bx" style="left:106px;top:532px"></div>
<svg style="left:77px;top:527px" width="14" height="16"><use href="#ficon"/></svg>
<div class="a sz" style="right:366.7px;top:530px;letter-spacing:-0.3px">262,144 KB</div>
<div class="a" style="left:445px;top:530px">File</div>
<div class="a" style="left:565px;top:530px">6/15/1982 12:00 AM</div>
<div class="bx" style="left:95px;top:549px"></div>
<div class="bx" style="left:106px;top:549px"></div>
<svg style="left:77px;top:544px" width="14" height="16"><use href="#ficon"/></svg>
<div class="a sz" style="right:366.7px;top:547px;letter-spacing:-0.3px">262,144 KB</div>
<div class="a" style="left:445px;top:547px">File</div>
<div class="bx" style="left:95px;top:566px"></div>
<div class="bx" style="left:106px;top:566px"></div>
<svg style="left:77px;top:561px" width="14" height="16"><use href="#ficon"/></svg>
<div class="a sz" style="right:366.7px;top:564px;letter-spacing:-0.3px">262,144 KB</div>
<div class="a" style="left:445px;top:564px">File</div>
<div class="bx" style="left:95px;top:583px"></div>
<div class="bx" style="left:106px;top:583px"></div>
<svg style="left:77px;top:578px" width="14" height="16"><use href="#ficon"/></svg>
<div class="a sz" style="right:366.7px;top:581px;letter-spacing:-0.3px">262,144 KB</div>
<div class="a" style="left:445px;top:581px">File</div>
<div class="bx" style="left:95px;top:600px"></div>
<div class="bx" style="left:106px;top:600px"></div>
<svg style="left:77px;top:595px" width="14" height="16"><use href="#ficon"/></svg>
<div class="a sz" style="right:366.7px;top:598px;letter-spacing:-0.3px">262,144 KB</div>
<div class="a" style="left:445px;top:598px">File</div>
</div></div>
<div class="a hdr" style="left:72px;top:116px;width:707px;height:20px"></div>
<div class="a hsep" style="left:314px;top:119px"></div>
<div class="a hsep" style="left:438px;top:119px"></div>
<div class="a hsep" style="left:558px;top:119px"></div>
<div class="a hsep" style="left:678px;top:119px"></div>
<div class="a" style="left:80px;top:120px">Name</div>
<div class="a" style="right:381px;top:120px;letter-spacing:-0.4px">Size</div>
<svg style="left:429px;top:123px" width="9" height="5" viewBox="0 0 9 5"><path d="M0 5L4.5 0 9 5z" fill="#aca899"/></svg>
<div class="a" style="left:449px;top:120px">Type</div>
<div class="a" style="left:568px;top:120px">Date Modified</div>
<div class="a trk" style="left:779px;top:116px;width:17px;height:480px"></div>
<div class="sbb" style="left:780px;top:116px;width:15px;height:16px"><svg style="left:2px;top:4px" width="9" height="6" shape-rendering="crispEdges"><path d="M4 0h1v1h-1zM3 1h3v1h-3zM2 2h5v1h-5zM1 3h3v1h-3zM5 3h3v1h-3zM0 4h3v1h-3zM6 4h3v1h-3zM0 5h2v1h-2zM7 5h2v1h-2z" fill="#4d6185"/></svg></div>
<div class="thumb" style="left:780px;top:278px;width:15px;height:155px"><i class="grip" style="left:3px;top:73px"></i></div>
<div class="sbb" style="left:780px;top:579px;width:15px;height:16px"><svg style="left:2px;top:5px" width="9" height="6" shape-rendering="crispEdges"><path d="M0 0h2v1h-2zM7 0h2v1h-2zM0 1h3v1h-3zM6 1h3v1h-3zM1 2h3v1h-3zM5 2h3v1h-3zM2 3h5v1h-5zM3 4h3v1h-3zM4 5h1v1h-1z" fill="#4d6185"/></svg></div>
<div class="a" style="left:121px;top:199px;width:88px;height:38px;background:#ffffe1;border:1px solid #000"></div>
<div class="a" style="left:128px;top:206px">Type: File</div>
<div class="a" style="left:128px;top:219px">Size: 736 bytes</div>

</body></html>
